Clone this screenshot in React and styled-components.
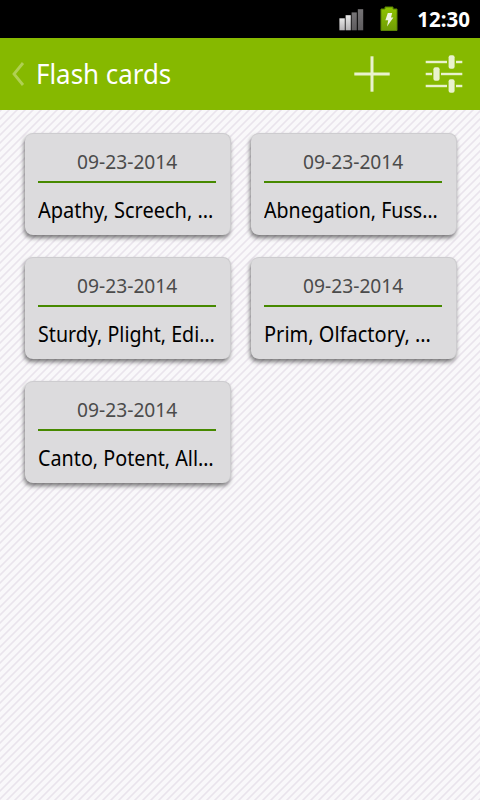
import React from "react";
import styled, { createGlobalStyle } from "styled-components";

const colors = {
  bar: "#86b900",
  onBar: "#e9f2cd",
  card: "#dcdbdd",
  divider: "#478900",
  date: "#4b4b4b",
  stripe: "#e9e4ec",
};

// stretch keeps the condensed preview inside the card
const decks = [
  { id: 1, date: "09-23-2014", words: "Apathy, Screech, …", stretch: 0.91 },
  { id: 2, date: "09-23-2014", words: "Abnegation, Fuss…", stretch: 0.89 },
  { id: 3, date: "09-23-2014", words: "Sturdy, Plight, Edi…", stretch: 0.893 },
  { id: 4, date: "09-23-2014", words: "Prim, Olfactory, …", stretch: 0.91 },
  { id: 5, date: "09-23-2014", words: "Canto, Potent, All…", stretch: 0.898 },
];

const SignalIcon = () => (
  <svg width="26" height="24" viewBox="0 0 26 24">
    <defs>
      <linearGradient id="on" x1="0" y1="0" x2="0" y2="1">
        <stop offset="0" stopColor="#e8e8e8" />
        <stop offset="1" stopColor="#b5b3b5" />
      </linearGradient>
      <linearGradient id="off" x1="0" y1="0" x2="0" y2="1">
        <stop offset="0" stopColor="#767476" />
        <stop offset="1" stopColor="#5e5c5e" />
      </linearGradient>
    </defs>
    <rect x="0.4" y="11.3" width="5.4" height="12" fill="url(#on)" />
    <rect x="6.6" y="8.2" width="5.2" height="15.1" fill="url(#on)" />
    <rect x="12.6" y="5.4" width="5.2" height="17.9" fill="url(#off)" />
    <rect x="18.8" y="2.2" width="5.4" height="21.1" fill="url(#off)" />
  </svg>
);

const BatteryIcon = () => (
  <svg width="20" height="26" viewBox="0 0 20 26">
    <defs>
      <linearGradient id="cell" x1="0" y1="0" x2="0" y2="1">
        <stop offset="0" stopColor="#8fc400" />
        <stop offset="1" stopColor="#6f9d05" />
      </linearGradient>
    </defs>
    <path
      d="M6 1h8v2h4v21.5H2V3h4z"
      fill="url(#cell)"
      stroke="#5b8403"
      strokeWidth="1"
      strokeLinejoin="round"
    />
    <path d="M8.8 7h4.4l-1.2 4.4h2.4L8 20.5l1.2-6.3H6.4z" fill="#eef3e0" />
  </svg>
);

const PlusIcon = () => (
  <svg width="36" height="36" viewBox="0 0 36 36" fill={colors.onBar}>
    <rect x="16.5" y="0.3" width="3" height="35.4" />
    <rect x="0.3" y="16.5" width="35.4" height="3" />
  </svg>
);

const SlidersIcon = () => (
  <svg width="38" height="40" viewBox="0 0 38 40" fill={colors.onBar}>
    <rect x="0.7" y="6.8" width="21.3" height="2.4" />
    <rect x="31" y="6.8" width="6.3" height="2.4" />
    <rect x="23.6" y="1.3" width="6" height="13.4" rx="2" />
    <rect x="0.7" y="18.8" width="6.3" height="2.4" />
    <rect x="16" y="18.8" width="21.3" height="2.4" />
    <rect x="8.4" y="13.3" width="6.2" height="13.4" rx="2" />
    <rect x="0.7" y="30.8" width="21.3" height="2.4" />
    <rect x="31" y="30.8" width="6.3" height="2.4" />
    <rect x="23.6" y="25.3" width="6" height="13.4" rx="2" />
  </svg>
);

const BackIcon = () => (
  <svg width="14" height="26" viewBox="0 0 14 26" fill="none">
    <path d="M12 2L3 13l9 11" stroke="#b0d053" strokeWidth="2.8" />
  </svg>
);

const App = () => {
  return (
    <>
      <GlobalStyle />
      <Screen>
        <StatusBar>
          <SignalIcon />
          <BatteryIcon />
          <Clock>12:30</Clock>
        </StatusBar>
        <ActionBar>
          <BackButton aria-label="Back">
            <BackIcon />
          </BackButton>
          <Title>Flash cards</Title>
          <IconButton aria-label="Add cards">
            <PlusIcon />
          </IconButton>
          <IconButton aria-label="Options">
            <SlidersIcon />
          </IconButton>
        </ActionBar>
        <CardGrid>
          {decks.map((deck) => (
            <Card key={deck.id}>
              <DateRow>
                <DateText>{deck.date}</DateText>
              </DateRow>
              <Words $stretch={deck.stretch}>{deck.words}</Words>
            </Card>
          ))}
        </CardGrid>
      </Screen>
    </>
  );
};

export default App;

const GlobalStyle = createGlobalStyle`
  * {
    box-sizing: border-box;
  }

  body {
    margin: 0;
    font-family: "Noto Sans", "Open Sans", sans-serif;
  }
`;

const Screen = styled.div`
  display: flex;
  flex-direction: column;
  width: 480px;
  height: 800px;
  overflow: hidden;
  background-color: #f9f8fa;
  background-image: linear-gradient(
    135deg,
    ${colors.stripe} 0 4%,
    transparent 10% 40%,
    ${colors.stripe} 46% 54%,
    transparent 60% 90%,
    ${colors.stripe} 96% 100%
  );
  background-size: 8px 8px;
  background-position: -1px 0;
`;

const StatusBar = styled.div`
  display: flex;
  align-items: center;
  justify-content: flex-end;
  height: 38px;
  padding-right: 10px;
  background-color: #000000;

  svg + svg {
    margin-left: 14px;
  }
`;

const Clock = styled.span`
  margin-left: 18px;
  color: #ffffff;
  font-size: 20.5px;
  font-weight: 700;
  line-height: 38px;
`;

const ActionBar = styled.header`
  display: flex;
  align-items: center;
  height: 72px;
  background-color: ${colors.bar};
`;

const BackButton = styled.button`
  display: flex;
  padding: 0;
  margin-left: 11px;
  border: none;
  background: none;
`;

const IconButton = styled.button`
  display: flex;
  align-items: center;
  justify-content: center;
  width: 72px;
  height: 72px;
  padding: 0;
  border: none;
  background: none;
`;

const Title = styled.h1`
  flex: 1;
  margin: 0 0 2px 11px;
  color: #ffffff;
  font-size: 28px;
  font-weight: 400;
  line-height: 70px;
  transform: scaleX(0.925);
  transform-origin: left;
`;

const CardGrid = styled.main`
  display: grid;
  grid-template-columns: 206px 206px;
  grid-auto-rows: 102px;
  gap: 22px 20px;
  padding: 23px 25px;
`;

const Card = styled.article`
  padding: 0 14px 0 13px;
  border: 1px solid #cdcccf;
  border-width: 1px 1px 0 0;
  border-radius: 8px;
  background-color: ${colors.card};
  box-shadow: -1px 3px 4px rgba(0, 0, 0, 0.5);
`;

const DateRow = styled.div`
  display: flex;
  justify-content: center;
  height: 49px;
  border-bottom: 2px solid ${colors.divider};
`;

const DateText = styled.time`
  color: ${colors.date};
  font-size: 20px;
  line-height: 56px;
  transform: scaleX(0.96);
`;

const Words = styled.p`
  margin: 0;
  color: #000000;
  font-size: 22px;
  line-height: 53px;
  white-space: nowrap;
  transform: scaleX(${({ $stretch }) => $stretch});
  transform-origin: left;
`;
